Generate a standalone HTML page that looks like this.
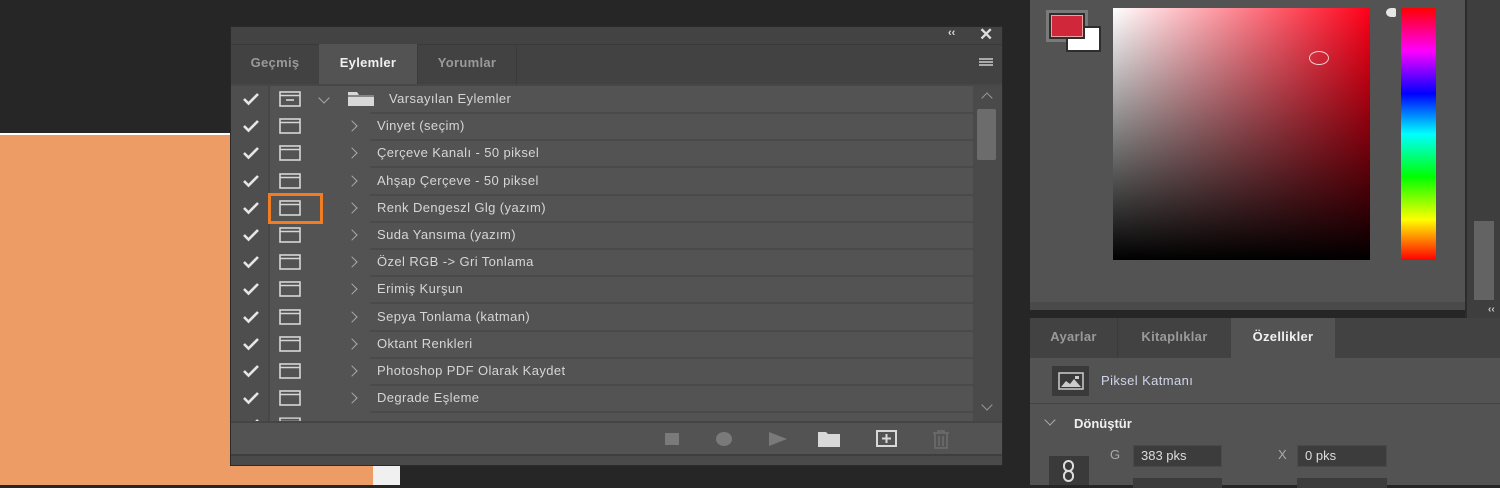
<!DOCTYPE html>
<html><head><meta charset="utf-8"><style>
*{margin:0;padding:0;box-sizing:border-box}
body{width:1500px;height:485px;background:#262626;position:relative;overflow:hidden;font-family:"Liberation Sans",sans-serif}
.a{position:absolute}
.txt{color:#d6d6d6;font-size:13px;letter-spacing:.4px}
.tab{position:absolute;top:44px;height:40px;line-height:38px;font-size:13px;font-weight:bold;color:#9a9a9a;text-align:center;letter-spacing:.3px}
</style></head><body>
<div class="a" style="left:0;top:133px;width:373px;height:2px;background:#fff"></div>
<div class="a" style="left:0;top:135px;width:373px;height:350px;background:#ee9c66"></div>
<div class="a" style="left:373px;top:465px;width:27px;height:20px;background:#f0f0f0"></div>

<div class="a" style="left:230px;top:26px;width:773px;height:440px;background:#535353;border:1px solid #2a2a2a"></div>
<div class="a" style="left:231px;top:27px;width:771px;height:17px;background:#434343"></div>
<div class="a" style="left:948px;top:27px;color:#ddd;font-size:11px;font-weight:bold">&lsaquo;&lsaquo;</div>
<div class="a" style="left:979px;top:25px;color:#ddd;font-size:17px;font-weight:bold">✕</div>
<div class="a" style="left:231px;top:44px;width:771px;height:40px;background:#424242;border-top:1px solid #393939"></div>
<div class="tab" style="left:231px;width:88px">Geçmiş</div>
<div class="tab" style="left:319px;width:98px;background:#535353;color:#f0f0f0">Eylemler</div>
<div class="tab" style="left:417px;width:100px;border-left:1px solid #3a3a3a;border-right:1px solid #3a3a3a">Yorumlar</div>
<div class="a" style="left:979px;top:58px;width:14px;height:8px;border-top:2px solid #aaa;border-bottom:2px solid #aaa"></div>
<div class="a" style="left:979px;top:61px;width:14px;height:2px;background:#aaa"></div>
<div class="a" style="left:231px;top:84px;width:771px;height:2px;background:#474747"></div>
<div class="a" style="left:231px;top:86px;width:37px;height:336px;background:#4e4e4e"></div>
<div class="a" style="left:268px;top:86px;width:2px;height:336px;background:#474747"></div>
<div class="a" style="left:973px;top:86px;width:29px;height:336px;background:#4a4a4a"></div>
<div class="a" style="left:977px;top:109px;width:19px;height:51px;background:#6c6c6c;border-radius:2px"></div>
<div class="a" style="left:983px;top:94px;width:8px;height:8px;border-left:1.5px solid #999;border-top:1.5px solid #999;transform:rotate(45deg)"></div>
<div class="a" style="left:983px;top:401px;width:8px;height:8px;border-right:1.5px solid #999;border-bottom:1.5px solid #999;transform:rotate(45deg)"></div>
<div id="rows"></div>
<div class="a" style="left:231px;top:421px;width:771px;height:2px;background:#454545"></div>
<div class="a" style="left:231px;top:423px;width:771px;height:32px;background:#535353"></div>
<div class="a" style="left:231px;top:454px;width:771px;height:2px;background:#3e3e3e"></div>
<div class="a" style="left:231px;top:456px;width:771px;height:9px;background:#4a4a4a"></div>
<div class="a" style="left:665px;top:433px;width:14px;height:12px;background:#7a7a7a"></div>
<div class="a" style="left:716px;top:432px;width:16px;height:14px;background:#7a7a7a;border-radius:50%"></div>
<svg class="a" style="left:768px;top:431px" width="20" height="16"><path d="M1 1 L19 8 L1 15Z" fill="#7a7a7a"/></svg>
<svg class="a" style="left:817px;top:431px" width="24" height="16"><path d="M1 1h8l2 2h12v13H1z" fill="#d8d8d8"/></svg>
<svg class="a" style="left:876px;top:430px" width="22" height="18"><rect x="1" y="1" width="19" height="15" fill="none" stroke="#d8d8d8" stroke-width="2"/><path d="M10.5 4v9M6 8.5h9" stroke="#d8d8d8" stroke-width="2"/></svg>
<svg class="a" style="left:931px;top:429px" width="20" height="20"><path d="M2 4h16M7 4V2h6v2M4 4v15h12V4M8 7v10M12 7v10" fill="none" stroke="#6e6e6e" stroke-width="1.5"/></svg>
<div class="a" style="left:268px;top:193px;width:55px;height:31px;border:3px solid #f07c26"></div>

<div class="a" style="left:1030px;top:0;width:437px;height:302px;background:#535353"></div>
<div class="a" style="left:1030px;top:302px;width:435px;height:8px;background:#4a4a4a"></div>
<div class="a" style="left:1465px;top:0;width:35px;height:318px;background:#3e3e3e;border-left:2px solid #2c2c2c"></div>
<div class="a" style="left:1474px;top:221px;width:20px;height:79px;background:#636363"></div>
<div class="a" style="left:1488px;top:304px;color:#ccc;font-size:10px;font-weight:bold">&lsaquo;&lsaquo;</div>
<div class="a" style="left:1046px;top:10px;width:42px;height:32px;background:#7a7a7a"></div>
<div class="a" style="left:1066px;top:26px;width:35px;height:26px;background:#fff;border:2px solid #2e2e2e"></div>
<div class="a" style="left:1049px;top:13px;width:36px;height:26px;background:#d0283a;border:2px solid #2e2e2e;outline:1px solid #e8a0a0;outline-offset:-3px"></div>
<div class="a" style="left:1113px;top:8px;width:257px;height:252px;background:linear-gradient(to bottom,rgba(0,0,0,0),#000),linear-gradient(to right,#fff,#ff0018)"></div>
<div class="a" style="left:1309px;top:51px;width:20px;height:14px;border:1px solid #f4d0d0;border-radius:50%"></div>
<div class="a" style="left:1401px;top:8px;width:35px;height:252px;background:linear-gradient(to bottom,#ff0000 0%,#ff00ff 17%,#0000ff 34%,#00ffff 50%,#00ff00 67%,#ffff00 84%,#ff0000 100%)"></div>
<div class="a" style="left:1386px;top:8px;width:10px;height:9px;background:#e6e6e6;border-radius:50% 20% 20% 50%"></div>

<div class="a" style="left:1030px;top:318px;width:470px;height:167px;background:#535353"></div>
<div class="a" style="left:1030px;top:318px;width:470px;height:40px;background:#424242"></div>
<div class="tab" style="left:1030px;top:318px;width:88px;border-right:1px solid #3a3a3a">Ayarlar</div>
<div class="tab" style="left:1118px;top:318px;width:113px">Kitaplıklar</div>
<div class="tab" style="left:1231px;top:318px;width:104px;background:#535353;color:#f0f0f0">Özellikler</div>
<div class="a" style="left:1052px;top:366px;width:37px;height:30px;background:#3a3a3a"></div>
<svg class="a" style="left:1058px;top:372px" width="26" height="18"><rect x="1" y="1" width="24" height="16" fill="none" stroke="#ccc" stroke-width="1.5"/><path d="M3 15l5-6 4 3 4-5 7 8z" fill="#ccc"/><rect x="17" y="4" width="4" height="3" fill="#ccc"/></svg>
<div class="a txt" style="left:1101px;top:373px;color:#cfd6ea">Piksel Katmanı</div>
<div class="a" style="left:1030px;top:403px;width:470px;height:1px;background:#444"></div>
<div class="a" style="left:1046px;top:416px;width:8px;height:8px;border-right:1.5px solid #aaa;border-bottom:1.5px solid #aaa;transform:rotate(45deg)"></div>
<div class="a" style="left:1074px;top:416px;color:#f0f0f0;font-size:13px;font-weight:bold">Dönüştür</div>
<div class="a" style="left:1049px;top:456px;width:40px;height:29px;background:#3a3a3a"></div>
<svg class="a" style="left:1062px;top:460px" width="14" height="22"><rect x="2" y="1" width="9" height="10" rx="4.5" fill="none" stroke="#ddd" stroke-width="2"/><rect x="2" y="11" width="9" height="10" rx="4.5" fill="none" stroke="#ddd" stroke-width="2"/></svg>
<div class="a" style="left:1110px;top:447px;color:#aaa;font-size:13px">G</div>
<div class="a" style="left:1133px;top:445px;width:89px;height:22px;background:#3c3c3c;border:1px solid #4a4a4a;color:#ddd;font-size:13px;line-height:20px;padding-left:7px">383 pks</div>
<div class="a" style="left:1278px;top:447px;color:#aaa;font-size:13px">X</div>
<div class="a" style="left:1297px;top:445px;width:90px;height:22px;background:#3c3c3c;border:1px solid #4a4a4a;color:#ddd;font-size:13px;line-height:20px;padding-left:7px">0 pks</div>
<div class="a" style="left:1133px;top:478px;width:89px;height:10px;background:#3c3c3c"></div>
<div class="a" style="left:1297px;top:478px;width:90px;height:10px;background:#3c3c3c"></div>

<script>
var names=["Vinyet (seçim)","Çerçeve Kanalı - 50 piksel","Ahşap Çerçeve - 50 piksel","Renk Dengeszl Glg (yazım)","Suda Yansıma (yazım)","Özel RGB -> Gri Tonlama","Erimiş Kurşun","Sepya Tonlama (katman)","Oktant Renkleri","Photoshop PDF Olarak Kaydet","Degrade Eşleme","Karışım Fırça Kl"];
var h='';
for(var i=0;i<13;i++){
 var c=99+27.2*i;
 if(c>428)break;
 h+='<svg class="a" style="left:242px;top:'+(c-7)+'px;'+(c>415?'clip-path:inset(0 0 '+Math.max(0,c-7+14-421)+'px 0);':'')+'" width="18" height="14"><path d="M2 7l4.5 4.5L16 2" fill="none" stroke="#e6e6e6" stroke-width="2.6"/></svg>';
 h+='<svg class="a" style="left:279px;top:'+(c-8)+'px;'+(c>415?'clip-path:inset(0 0 '+Math.max(0,c-8+16-421)+'px 0);':'')+'" width="22" height="16"><rect x="1" y="1" width="20" height="14" fill="none" stroke="#d6d6d6" stroke-width="1.6"/><path d="M1 4.5h20" stroke="#d6d6d6" stroke-width="1.6"/>'+(i==0?'<path d="M7 9h8" stroke="#d6d6d6" stroke-width="1.6"/>':'')+'</svg>';
 if(i==0){
  h+='<div class="a" style="left:320px;top:'+(c-5)+'px;width:8px;height:8px;border-right:1.3px solid #aaa;border-bottom:1.3px solid #aaa;transform:rotate(45deg)"></div>';
  h+='<svg class="a" style="left:347px;top:'+(c-8)+'px" width="28" height="16"><path d="M1 1h9l2 3h15v11H1z" fill="#d8d8d8"/><path d="M1 5h26" stroke="#535353" stroke-width="1.2"/></svg>';
  h+='<div class="a txt" style="left:389px;top:'+(c-8)+'px">Varsayılan Eylemler</div>';
 } else if(c<415){
  h+='<div class="a" style="left:348px;top:'+(c-4)+'px;width:8px;height:8px;border-right:1.3px solid #aaa;border-top:1.3px solid #aaa;transform:rotate(45deg)"></div>';
  h+='<div class="a txt" style="left:377px;top:'+(c-8)+'px">'+names[i-1].replace(/>/g,'&gt;')+'</div>';
 }
 if(c<415) h+='<div class="a" style="left:370px;top:'+(c+13)+'px;width:603px;height:2px;background:#4a4a4a"></div>';
}
document.getElementById('rows').innerHTML=h;
</script>
</body></html>
